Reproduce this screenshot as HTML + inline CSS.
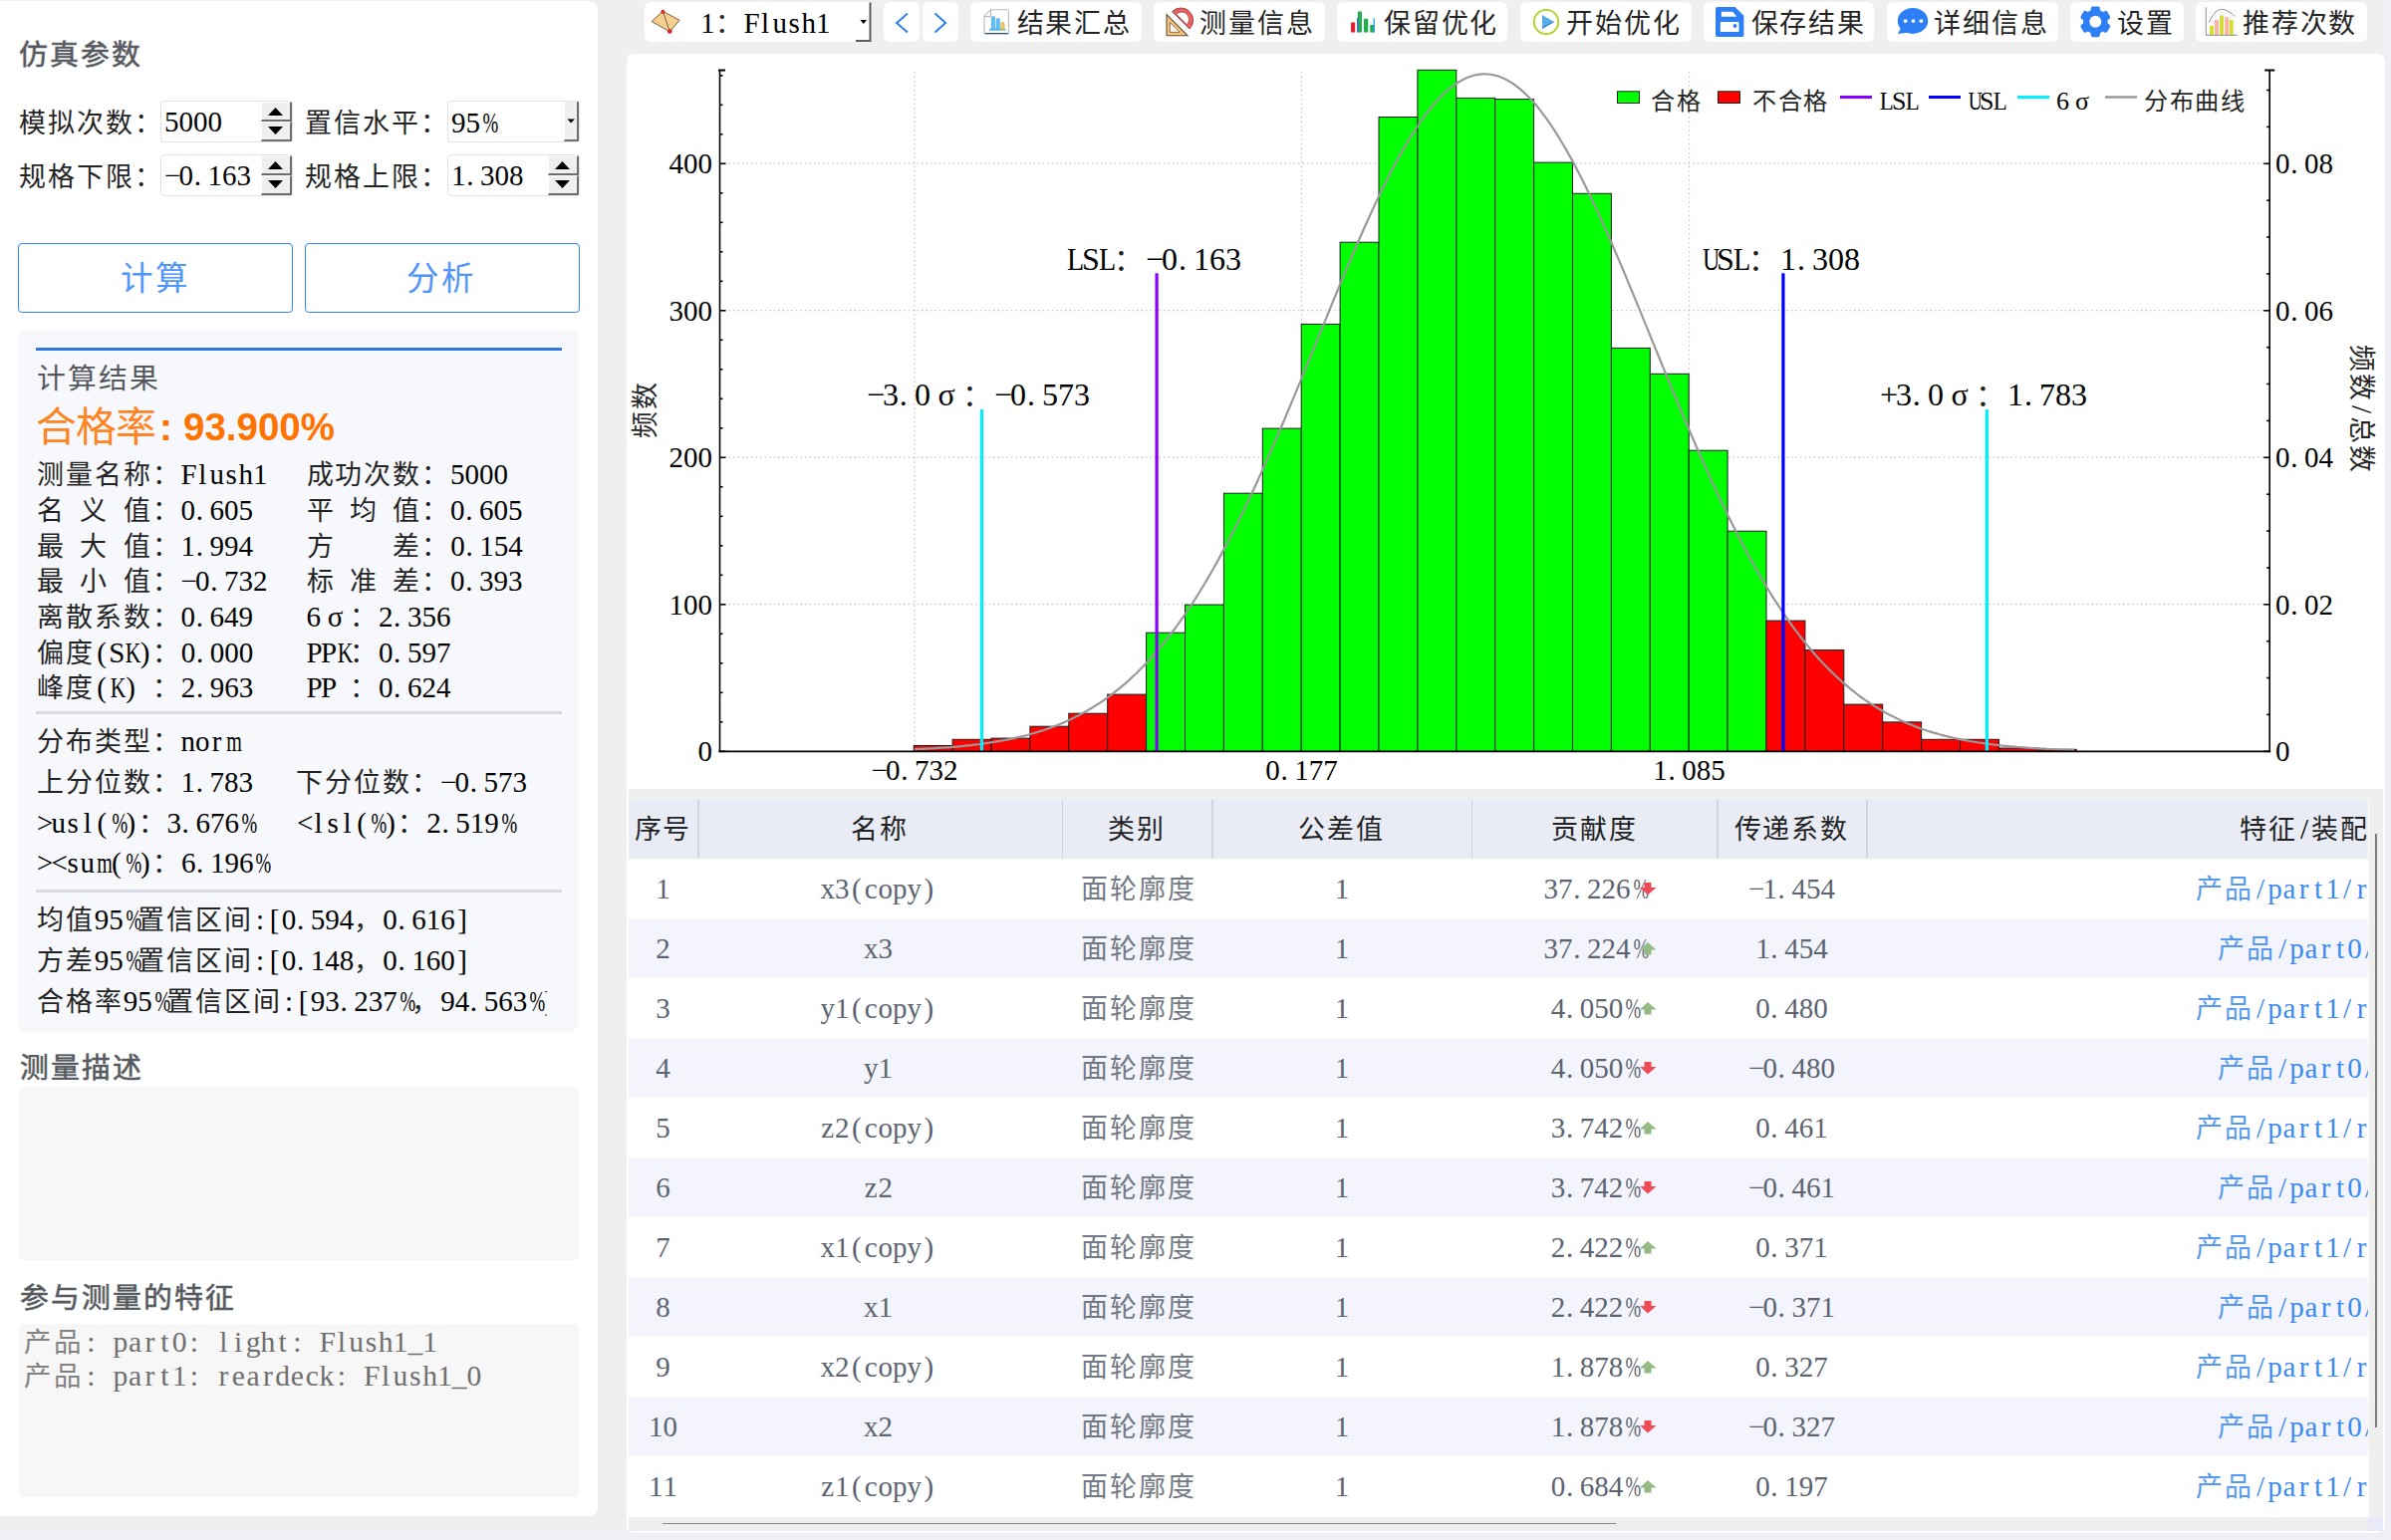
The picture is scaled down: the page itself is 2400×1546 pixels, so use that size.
<!DOCTYPE html><html lang="zh-CN"><head><meta charset="utf-8"><style>
*{box-sizing:border-box}
html,body{margin:0;padding:0}
body{width:2400px;height:1546px;overflow:hidden;position:relative;background:#efefef;font-family:"Liberation Serif",serif;}
.r{position:absolute}
.t{position:absolute;white-space:pre;font-size:29px;line-height:40px;color:#000}
.t i{display:inline-block;width:.5em;text-align:center;font-style:normal}
.t u{text-decoration:none;font-size:.93em;letter-spacing:.07em;opacity:.86}
.t b.w{display:inline-block;width:1em;text-align:center;font-weight:normal}
svg{position:absolute;left:0;top:0}
.ttl{font-size:31px;line-height:40px;color:#3b3f46;-webkit-text-stroke:.6px #3b3f46}
</style></head><body><div class="r" style="left:0px;top:1px;width:600px;height:1521px;background:#fff;border-radius:0 9px 9px 0"></div><div class="t" style="left:20px;top:34.0px;"></div><div class="t ttl" style="left:19px;top:34.5px"><u>仿真参数</u></div><div class="t" style="left:19px;top:102.5px;"><u>模拟次数：</u></div><div class="t" style="left:306px;top:102.5px;"><u>置信水平：</u></div><div class="t" style="left:19px;top:157.0px;"><u>规格下限：</u></div><div class="t" style="left:306px;top:157.0px;"><u>规格上限：</u></div><div class="r" style="left:161px;top:101px;width:133px;height:42px;background:#fff;border:1.5px solid #e3e3e3;border-radius:4px"></div><div class="r" style="left:262px;top:102.0px;width:31px;height:20.0px;background:#efefef;border-right:2.5px solid #6e6e6e;border-bottom:2.5px solid #6e6e6e;border-top:1px solid #fff;border-left:1px solid #fff"></div><div class="r" style="left:262px;top:122.0px;width:31px;height:20.0px;background:#efefef;border-right:2.5px solid #6e6e6e;border-bottom:2.5px solid #6e6e6e;border-top:1px solid #fff;border-left:1px solid #fff"></div><svg style="left:0;top:0" width="2400" height="210"><polygon points="269.0,116 284.0,116 276.5,108" fill="#000"/><polygon points="269.0,127.0 284.0,127.0 276.5,135.0" fill="#000"/></svg><div class="t" style="left:165px;top:102.0px;"><i>5</i><i>0</i><i>0</i><i>0</i></div><div class="r" style="left:161px;top:155px;width:133px;height:42px;background:#fff;border:1.5px solid #e3e3e3;border-radius:4px"></div><div class="r" style="left:262px;top:156.0px;width:31px;height:20.0px;background:#efefef;border-right:2.5px solid #6e6e6e;border-bottom:2.5px solid #6e6e6e;border-top:1px solid #fff;border-left:1px solid #fff"></div><div class="r" style="left:262px;top:176.0px;width:31px;height:20.0px;background:#efefef;border-right:2.5px solid #6e6e6e;border-bottom:2.5px solid #6e6e6e;border-top:1px solid #fff;border-left:1px solid #fff"></div><svg style="left:0;top:0" width="2400" height="210"><polygon points="269.0,170 284.0,170 276.5,162" fill="#000"/><polygon points="269.0,181.0 284.0,181.0 276.5,189.0" fill="#000"/></svg><div class="t" style="left:165px;top:156.0px;"><i>−</i><i>0</i><i style="transform:translateX(-.1em)">.</i><i>1</i><i>6</i><i>3</i></div><div class="r" style="left:449px;top:155px;width:133px;height:42px;background:#fff;border:1.5px solid #e3e3e3;border-radius:4px"></div><div class="r" style="left:550px;top:156.0px;width:31px;height:20.0px;background:#efefef;border-right:2.5px solid #6e6e6e;border-bottom:2.5px solid #6e6e6e;border-top:1px solid #fff;border-left:1px solid #fff"></div><div class="r" style="left:550px;top:176.0px;width:31px;height:20.0px;background:#efefef;border-right:2.5px solid #6e6e6e;border-bottom:2.5px solid #6e6e6e;border-top:1px solid #fff;border-left:1px solid #fff"></div><svg style="left:0;top:0" width="2400" height="210"><polygon points="557.0,170 572.0,170 564.5,162" fill="#000"/><polygon points="557.0,181.0 572.0,181.0 564.5,189.0" fill="#000"/></svg><div class="t" style="left:453px;top:156.0px;"><i>1</i><i style="transform:translateX(-.1em)">.</i><i>3</i><i>0</i><i>8</i></div><div class="r" style="left:449px;top:101px;width:133px;height:42px;background:#fff;border:1.5px solid #e3e3e3;border-radius:4px"></div><div class="r" style="left:566px;top:102px;width:15px;height:40px;background:#efefef;border-right:2.5px solid #6e6e6e;border-bottom:2.5px solid #6e6e6e;border-left:1px solid #fff"></div><svg style="left:0;top:0" width="600" height="150"><polygon points="569.5,119.5 577,119.5 573.2,123.5" fill="#000"/></svg><div class="t" style="left:453px;top:102.5px;"><i>9</i><i>5</i><i style="transform:scaleX(0.65)">%</i></div><div class="r" style="left:18px;top:243.5px;width:276px;height:70.5px;border:1.6px solid #3384fa;border-radius:4px;background:#fff"></div><div class="r" style="left:305.5px;top:243.5px;width:276.5px;height:70.5px;border:1.6px solid #3384fa;border-radius:4px;background:#fff"></div><div class="t" style="left:-144.0px;top:256.5px;font-size:35px;line-height:46px;color:#3384fa;width:600px;text-align:center;"><u>计算</u></div><div class="t" style="left:143.5px;top:256.5px;font-size:35px;line-height:46px;color:#3384fa;width:600px;text-align:center;"><u>分析</u></div><div class="r" style="left:18px;top:331px;width:562px;height:705px;background:#f7f8fc;border-radius:8px"></div><div class="r" style="left:36px;top:348.5px;width:528px;height:3.5px;background:#3079e4;"></div><div class="t" style="left:37px;top:359.5px;color:#3b3f46;font-size:31px;line-height:40px"><u>计算结果</u></div><div class="t" style="left:36px;top:404px;color:#ff7300;font-size:41px;line-height:50px"><u style="font-size:1em;letter-spacing:-.02em">合格率</u></div><div class="t" style="left:160px;top:404px;color:#ff7300;font-family:'Liberation Sans',sans-serif;font-weight:bold;font-size:38.5px;line-height:50px">:</div><div class="t" style="left:184px;top:404px;color:#ff7300;font-family:'Liberation Sans',sans-serif;font-weight:bold;font-size:38.5px;line-height:50px">93.900%</div><div class="t" style="left:37px;top:456.2px;"><u>测量名称：</u><i>F</i><i>l</i><i>u</i><i>s</i><i>h</i><i>1</i></div><div class="t" style="left:307.5px;top:456.2px;"><u>成功次数：</u><i>5</i><i>0</i><i>0</i><i>0</i></div><div class="t" style="left:37px;top:491.9px;"><u>名</u><i> </i><u>义</u><i> </i><u>值：</u><i>0</i><i style="transform:translateX(-.1em)">.</i><i>6</i><i>0</i><i>5</i></div><div class="t" style="left:307.5px;top:491.9px;"><u>平</u><i> </i><u>均</u><i> </i><u>值：</u><i>0</i><i style="transform:translateX(-.1em)">.</i><i>6</i><i>0</i><i>5</i></div><div class="t" style="left:37px;top:527.6px;"><u>最</u><i> </i><u>大</u><i> </i><u>值：</u><i>1</i><i style="transform:translateX(-.1em)">.</i><i>9</i><i>9</i><i>4</i></div><div class="t" style="left:307.5px;top:527.6px;"><u>方</u><i> </i><i> </i><i> </i><i> </i><u>差：</u><i>0</i><i style="transform:translateX(-.1em)">.</i><i>1</i><i>5</i><i>4</i></div><div class="t" style="left:37px;top:563.3px;"><u>最</u><i> </i><u>小</u><i> </i><u>值：</u><i>−</i><i>0</i><i style="transform:translateX(-.1em)">.</i><i>7</i><i>3</i><i>2</i></div><div class="t" style="left:307.5px;top:563.3px;"><u>标</u><i> </i><u>准</u><i> </i><u>差：</u><i>0</i><i style="transform:translateX(-.1em)">.</i><i>3</i><i>9</i><i>3</i></div><div class="t" style="left:37px;top:599.0px;"><u>离散系数：</u><i>0</i><i style="transform:translateX(-.1em)">.</i><i>6</i><i>4</i><i>9</i></div><div class="t" style="left:307.5px;top:599.0px;"><i>6</i><b class="w">σ</b><u>：</u><i>2</i><i style="transform:translateX(-.1em)">.</i><i>3</i><i>5</i><i>6</i></div><div class="t" style="left:37px;top:634.7px;"><u>偏度</u><i>(</i><i>S</i><i style="transform:scaleX(0.75)">K</i><i>)</i><u>：</u><i>0</i><i style="transform:translateX(-.1em)">.</i><i>0</i><i>0</i><i>0</i></div><div class="t" style="left:307.5px;top:634.7px;"><i>P</i><i>P</i><i style="transform:scaleX(0.75)">K</i><u>：</u><i>0</i><i style="transform:translateX(-.1em)">.</i><i>5</i><i>9</i><i>7</i></div><div class="t" style="left:37px;top:670.4px;"><u>峰度</u><i>(</i><i style="transform:scaleX(0.75)">K</i><i>)</i><i> </i><u>：</u><i>2</i><i style="transform:translateX(-.1em)">.</i><i>9</i><i>6</i><i>3</i></div><div class="t" style="left:307.5px;top:670.4px;"><i>P</i><i>P</i><i> </i><u>：</u><i>0</i><i style="transform:translateX(-.1em)">.</i><i>6</i><i>2</i><i>4</i></div><div class="r" style="left:36px;top:713.5px;width:528px;height:3.5px;background:#d8d9e2;"></div><div class="t" style="left:37px;top:723.5px;"><u>分布类型：</u><i>n</i><i>o</i><i>r</i><i style="transform:scaleX(0.69)">m</i></div><div class="t" style="left:37px;top:764.6px;"><u>上分位数：</u><i>1</i><i style="transform:translateX(-.1em)">.</i><i>7</i><i>8</i><i>3</i><i> </i><i> </i><i> </i><u>下分位数：</u><i>−</i><i>0</i><i style="transform:translateX(-.1em)">.</i><i>5</i><i>7</i><i>3</i></div><div class="t" style="left:37px;top:805.5px;"><i>&gt;</i><i>u</i><i>s</i><i>l</i><i>(</i><i style="transform:scaleX(0.65)">%</i><i>)</i><u>：</u><i>3</i><i style="transform:translateX(-.1em)">.</i><i>6</i><i>7</i><i>6</i><i style="transform:scaleX(0.65)">%</i><i> </i><i> </i><i> </i><i>&lt;</i><i>l</i><i>s</i><i>l</i><i>(</i><i style="transform:scaleX(0.65)">%</i><i>)</i><u>：</u><i>2</i><i style="transform:translateX(-.1em)">.</i><i>5</i><i>1</i><i>9</i><i style="transform:scaleX(0.65)">%</i></div><div class="t" style="left:37px;top:846.4px;"><i>&gt;</i><i>&lt;</i><i>s</i><i>u</i><i style="transform:scaleX(0.69)">m</i><i>(</i><i style="transform:scaleX(0.65)">%</i><i>)</i><u>：</u><i>6</i><i style="transform:translateX(-.1em)">.</i><i>1</i><i>9</i><i>6</i><i style="transform:scaleX(0.65)">%</i></div><div class="r" style="left:36px;top:892.5px;width:528px;height:3.5px;background:#d8d9e2;"></div><div class="t" style="left:37px;top:903.3px;"><u>均值</u><i>9</i><i>5</i><i style="transform:scaleX(0.65)">%</i><u>置信区间</u><i>:</i><i>[</i><i>0</i><i style="transform:translateX(-.1em)">.</i><i>5</i><i>9</i><i>4</i><u>，</u><i>0</i><i style="transform:translateX(-.1em)">.</i><i>6</i><i>1</i><i>6</i><i>]</i></div><div class="t" style="left:37px;top:943.7px;"><u>方差</u><i>9</i><i>5</i><i style="transform:scaleX(0.65)">%</i><u>置信区间</u><i>:</i><i>[</i><i>0</i><i style="transform:translateX(-.1em)">.</i><i>1</i><i>4</i><i>8</i><u>，</u><i>0</i><i style="transform:translateX(-.1em)">.</i><i>1</i><i>6</i><i>0</i><i>]</i></div><div class="r" style="left:0;top:0;width:549px;height:1040px;overflow:hidden"><div class="t" style="left:37px;top:984.5px;"><u>合格率</u><i>9</i><i>5</i><i style="transform:scaleX(0.65)">%</i><u>置信区间</u><i>:</i><i>[</i><i>9</i><i>3</i><i style="transform:translateX(-.1em)">.</i><i>2</i><i>3</i><i>7</i><i style="transform:scaleX(0.65)">%</i><u>，</u><i>9</i><i>4</i><i style="transform:translateX(-.1em)">.</i><i>5</i><i>6</i><i>3</i><i style="transform:scaleX(0.65)">%</i><i>]</i></div></div><div class="t ttl" style="left:20px;top:1051.5px"><u>测量描述</u></div><div class="r" style="left:19px;top:1091px;width:562px;height:174px;background:#f7f7f7;border-radius:5px"></div><div class="t ttl" style="left:20px;top:1283px"><u>参与测量的特征</u></div><div class="r" style="left:19px;top:1329px;width:562px;height:174px;background:#f7f7f7;border-radius:5px"></div><div class="t" style="left:24px;top:1327.3px;font-size:29.6px;line-height:41px;color:#6f6f6f;"><u>产品</u><i>:</i><i> </i><i>p</i><i>a</i><i>r</i><i>t</i><i>0</i><i>:</i><i> </i><i>l</i><i>i</i><i>g</i><i>h</i><i>t</i><i>:</i><i> </i><i>F</i><i>l</i><i>u</i><i>s</i><i>h</i><i>1</i><i>_</i><i>1</i></div><div class="t" style="left:24px;top:1360.5px;font-size:29.6px;line-height:41px;color:#6f6f6f;"><u>产品</u><i>:</i><i> </i><i>p</i><i>a</i><i>r</i><i>t</i><i>1</i><i>:</i><i> </i><i>r</i><i>e</i><i>a</i><i>r</i><i>d</i><i>e</i><i>c</i><i>k</i><i>:</i><i> </i><i>F</i><i>l</i><i>u</i><i>s</i><i>h</i><i>1</i><i>_</i><i>0</i></div><svg width="2400" height="800" style="left:0;top:0"><path d="M629,62 Q629,54 637,54 H2386 Q2394,54 2394,62 V792 H629 Z" fill="#fff"/><line x1="722.5" y1="164.2" x2="2278.2" y2="164.2" stroke="#c4c4c4" stroke-width="1.2" stroke-dasharray="1.5 3"/><line x1="722.5" y1="311.7" x2="2278.2" y2="311.7" stroke="#c4c4c4" stroke-width="1.2" stroke-dasharray="1.5 3"/><line x1="722.5" y1="459.2" x2="2278.2" y2="459.2" stroke="#c4c4c4" stroke-width="1.2" stroke-dasharray="1.5 3"/><line x1="722.5" y1="606.7" x2="2278.2" y2="606.7" stroke="#c4c4c4" stroke-width="1.2" stroke-dasharray="1.5 3"/><line x1="918" y1="72" x2="918" y2="754.3" stroke="#c4c4c4" stroke-width="1.2" stroke-dasharray="1.5 3"/><line x1="1306.6" y1="72" x2="1306.6" y2="754.3" stroke="#c4c4c4" stroke-width="1.2" stroke-dasharray="1.5 3"/><line x1="1695.6" y1="72" x2="1695.6" y2="754.3" stroke="#c4c4c4" stroke-width="1.2" stroke-dasharray="1.5 3"/><rect x="917.20" y="748.5" width="38.9" height="5.80" fill="#ff0000" stroke="#1c1c1c" stroke-width="1"/><rect x="956.10" y="742.3" width="38.9" height="12.00" fill="#ff0000" stroke="#1c1c1c" stroke-width="1"/><rect x="995.00" y="741.1" width="38.9" height="13.20" fill="#ff0000" stroke="#1c1c1c" stroke-width="1"/><rect x="1033.90" y="729.2" width="38.9" height="25.10" fill="#ff0000" stroke="#1c1c1c" stroke-width="1"/><rect x="1072.80" y="716.2" width="38.9" height="38.10" fill="#ff0000" stroke="#1c1c1c" stroke-width="1"/><rect x="1111.70" y="697.1" width="38.9" height="57.20" fill="#ff0000" stroke="#1c1c1c" stroke-width="1"/><rect x="1150.60" y="635.2" width="38.9" height="119.10" fill="#00ff00" stroke="#1c1c1c" stroke-width="1"/><rect x="1189.50" y="607.1" width="38.9" height="147.20" fill="#00ff00" stroke="#1c1c1c" stroke-width="1"/><rect x="1228.40" y="495.2" width="38.9" height="259.10" fill="#00ff00" stroke="#1c1c1c" stroke-width="1"/><rect x="1267.30" y="430.1" width="38.9" height="324.20" fill="#00ff00" stroke="#1c1c1c" stroke-width="1"/><rect x="1306.20" y="325.4" width="38.9" height="428.90" fill="#00ff00" stroke="#1c1c1c" stroke-width="1"/><rect x="1345.10" y="243.2" width="38.9" height="511.10" fill="#00ff00" stroke="#1c1c1c" stroke-width="1"/><rect x="1384.00" y="117.5" width="38.9" height="636.80" fill="#00ff00" stroke="#1c1c1c" stroke-width="1"/><rect x="1422.90" y="70.3" width="38.9" height="684.00" fill="#00ff00" stroke="#1c1c1c" stroke-width="1"/><rect x="1461.80" y="98.4" width="38.9" height="655.90" fill="#00ff00" stroke="#1c1c1c" stroke-width="1"/><rect x="1500.70" y="99.6" width="38.9" height="654.70" fill="#00ff00" stroke="#1c1c1c" stroke-width="1"/><rect x="1539.60" y="163.1" width="38.9" height="591.20" fill="#00ff00" stroke="#1c1c1c" stroke-width="1"/><rect x="1578.50" y="194.3" width="38.9" height="560.00" fill="#00ff00" stroke="#1c1c1c" stroke-width="1"/><rect x="1617.40" y="349.4" width="38.9" height="404.90" fill="#00ff00" stroke="#1c1c1c" stroke-width="1"/><rect x="1656.30" y="375.3" width="38.9" height="379.00" fill="#00ff00" stroke="#1c1c1c" stroke-width="1"/><rect x="1695.20" y="452.2" width="38.9" height="302.10" fill="#00ff00" stroke="#1c1c1c" stroke-width="1"/><rect x="1734.10" y="533.2" width="38.9" height="221.10" fill="#00ff00" stroke="#1c1c1c" stroke-width="1"/><rect x="1773.00" y="623.1" width="38.9" height="131.20" fill="#ff0000" stroke="#1c1c1c" stroke-width="1"/><rect x="1811.90" y="652.6" width="38.9" height="101.70" fill="#ff0000" stroke="#1c1c1c" stroke-width="1"/><rect x="1850.80" y="707.1" width="38.9" height="47.20" fill="#ff0000" stroke="#1c1c1c" stroke-width="1"/><rect x="1889.70" y="724.9" width="38.9" height="29.40" fill="#ff0000" stroke="#1c1c1c" stroke-width="1"/><rect x="1928.60" y="742.3" width="38.9" height="12.00" fill="#ff0000" stroke="#1c1c1c" stroke-width="1"/><rect x="1967.50" y="742.3" width="38.9" height="12.00" fill="#ff0000" stroke="#1c1c1c" stroke-width="1"/><rect x="2006.40" y="751" width="38.9" height="3.30" fill="#ff0000" stroke="#1c1c1c" stroke-width="1"/><rect x="2045.30" y="752.3" width="38.9" height="2.00" fill="#ff0000" stroke="#1c1c1c" stroke-width="1"/><polyline points="918.0,752.2 921.0,752.1 924.0,751.9 927.0,751.8 930.0,751.6 933.0,751.5 936.0,751.3 939.0,751.1 942.0,750.9 945.0,750.7 948.0,750.5 951.0,750.3 954.0,750.1 957.0,749.8 960.0,749.6 963.0,749.3 966.0,749.0 969.0,748.7 972.0,748.4 975.0,748.1 978.0,747.7 981.0,747.3 984.0,747.0 987.0,746.6 990.0,746.1 993.0,745.7 996.0,745.2 999.0,744.7 1002.0,744.2 1005.0,743.7 1008.0,743.1 1011.0,742.6 1014.0,741.9 1017.0,741.3 1020.0,740.6 1023.0,739.9 1026.0,739.2 1029.0,738.5 1032.0,737.7 1035.0,736.8 1038.0,736.0 1041.0,735.1 1044.0,734.1 1047.0,733.2 1050.0,732.2 1053.0,731.1 1056.0,730.0 1059.0,728.9 1062.0,727.7 1065.0,726.4 1068.0,725.2 1071.0,723.8 1074.0,722.5 1077.0,721.0 1080.0,719.5 1083.0,718.0 1086.0,716.4 1089.0,714.8 1092.0,713.0 1095.0,711.3 1098.0,709.4 1101.0,707.5 1104.0,705.6 1107.0,703.6 1110.0,701.5 1113.0,699.3 1116.0,697.1 1119.0,694.7 1122.0,692.4 1125.0,689.9 1128.0,687.4 1131.0,684.8 1134.0,682.1 1137.0,679.3 1140.0,676.5 1143.0,673.5 1146.0,670.5 1149.0,667.4 1152.0,664.2 1155.0,661.0 1158.0,657.6 1161.0,654.1 1164.0,650.6 1167.0,647.0 1170.0,643.2 1173.0,639.4 1176.0,635.5 1179.0,631.5 1182.0,627.4 1185.0,623.2 1188.0,618.9 1191.0,614.5 1194.0,610.1 1197.0,605.5 1200.0,600.8 1203.0,596.0 1206.0,591.2 1209.0,586.2 1212.0,581.1 1215.0,576.0 1218.0,570.7 1221.0,565.4 1224.0,559.9 1227.0,554.4 1230.0,548.8 1233.0,543.1 1236.0,537.3 1239.0,531.4 1242.0,525.4 1245.0,519.3 1248.0,513.2 1251.0,506.9 1254.0,500.6 1257.0,494.2 1260.0,487.8 1263.0,481.2 1266.0,474.6 1269.0,467.9 1272.0,461.2 1275.0,454.3 1278.0,447.5 1281.0,440.5 1284.0,433.6 1287.0,426.5 1290.0,419.4 1293.0,412.3 1296.0,405.1 1299.0,397.9 1302.0,390.7 1305.0,383.4 1308.0,376.1 1311.0,368.8 1314.0,361.5 1317.0,354.1 1320.0,346.8 1323.0,339.4 1326.0,332.1 1329.0,324.7 1332.0,317.4 1335.0,310.0 1338.0,302.7 1341.0,295.5 1344.0,288.2 1347.0,281.0 1350.0,273.9 1353.0,266.7 1356.0,259.7 1359.0,252.7 1362.0,245.7 1365.0,238.8 1368.0,232.0 1371.0,225.3 1374.0,218.7 1377.0,212.1 1380.0,205.6 1383.0,199.3 1386.0,193.0 1389.0,186.9 1392.0,180.9 1395.0,174.9 1398.0,169.2 1401.0,163.5 1404.0,158.0 1407.0,152.6 1410.0,147.4 1413.0,142.3 1416.0,137.3 1419.0,132.6 1422.0,128.0 1425.0,123.5 1428.0,119.2 1431.0,115.1 1434.0,111.2 1437.0,107.5 1440.0,103.9 1443.0,100.6 1446.0,97.4 1449.0,94.4 1452.0,91.6 1455.0,89.0 1458.0,86.6 1461.0,84.5 1464.0,82.5 1467.0,80.7 1470.0,79.2 1473.0,77.8 1476.0,76.7 1479.0,75.8 1482.0,75.1 1485.0,74.6 1488.0,74.4 1491.0,74.3 1494.0,74.5 1497.0,74.9 1500.0,75.5 1503.0,76.3 1506.0,77.3 1509.0,78.5 1512.0,80.0 1515.0,81.7 1518.0,83.5 1521.0,85.6 1524.0,87.9 1527.0,90.4 1530.0,93.1 1533.0,96.0 1536.0,99.0 1539.0,102.3 1542.0,105.8 1545.0,109.4 1548.0,113.3 1551.0,117.3 1554.0,121.5 1557.0,125.9 1560.0,130.4 1563.0,135.1 1566.0,140.0 1569.0,145.0 1572.0,150.1 1575.0,155.5 1578.0,160.9 1581.0,166.5 1584.0,172.2 1587.0,178.1 1590.0,184.1 1593.0,190.1 1596.0,196.4 1599.0,202.7 1602.0,209.1 1605.0,215.6 1608.0,222.2 1611.0,228.9 1614.0,235.7 1617.0,242.5 1620.0,249.4 1623.0,256.4 1626.0,263.4 1629.0,270.5 1632.0,277.7 1635.0,284.9 1638.0,292.1 1641.0,299.3 1644.0,306.6 1647.0,313.9 1650.0,321.3 1653.0,328.6 1656.0,336.0 1659.0,343.3 1662.0,350.7 1665.0,358.0 1668.0,365.4 1671.0,372.7 1674.0,380.0 1677.0,387.3 1680.0,394.5 1683.0,401.8 1686.0,409.0 1689.0,416.1 1692.0,423.2 1695.0,430.3 1698.0,437.3 1701.0,444.2 1704.0,451.1 1707.0,458.0 1710.0,464.8 1713.0,471.5 1716.0,478.1 1719.0,484.7 1722.0,491.2 1725.0,497.6 1728.0,504.0 1731.0,510.3 1734.0,516.5 1737.0,522.6 1740.0,528.6 1743.0,534.5 1746.0,540.4 1749.0,546.1 1752.0,551.8 1755.0,557.4 1758.0,562.9 1761.0,568.2 1764.0,573.5 1767.0,578.7 1770.0,583.8 1773.0,588.9 1776.0,593.8 1779.0,598.6 1782.0,603.3 1785.0,607.9 1788.0,612.5 1791.0,616.9 1794.0,621.2 1797.0,625.5 1800.0,629.6 1803.0,633.7 1806.0,637.6 1809.0,641.5 1812.0,645.2 1815.0,648.9 1818.0,652.5 1821.0,656.0 1824.0,659.4 1827.0,662.7 1830.0,665.9 1833.0,669.1 1836.0,672.1 1839.0,675.1 1842.0,678.0 1845.0,680.8 1848.0,683.5 1851.0,686.2 1854.0,688.7 1857.0,691.2 1860.0,693.6 1863.0,696.0 1866.0,698.3 1869.0,700.5 1872.0,702.6 1875.0,704.6 1878.0,706.6 1881.0,708.6 1884.0,710.4 1887.0,712.2 1890.0,714.0 1893.0,715.6 1896.0,717.3 1899.0,718.8 1902.0,720.3 1905.0,721.8 1908.0,723.2 1911.0,724.6 1914.0,725.9 1917.0,727.1 1920.0,728.3 1923.0,729.5 1926.0,730.6 1929.0,731.7 1932.0,732.7 1935.0,733.7 1938.0,734.6 1941.0,735.6 1944.0,736.4 1947.0,737.3 1950.0,738.1 1953.0,738.9 1956.0,739.6 1959.0,740.3 1962.0,741.0 1965.0,741.6 1968.0,742.3 1971.0,742.9 1974.0,743.4 1977.0,744.0 1980.0,744.5 1983.0,745.0 1986.0,745.5 1989.0,745.9 1992.0,746.4 1995.0,746.8 1998.0,747.2 2001.0,747.5 2004.0,747.9 2007.0,748.2 2010.0,748.6 2013.0,748.9 2016.0,749.2 2019.0,749.4 2022.0,749.7 2025.0,750.0 2028.0,750.2 2031.0,750.4 2034.0,750.6 2037.0,750.9 2040.0,751.0 2043.0,751.2 2046.0,751.4 2049.0,751.6 2052.0,751.7 2055.0,751.9 2058.0,752.0 2061.0,752.2 2064.0,752.3 2067.0,752.4 2070.0,752.5 2073.0,752.6 2076.0,752.7 2079.0,752.8 2082.0,752.9" fill="none" stroke="#999" stroke-width="2.2"/><rect x="983.8" y="411" width="3.2" height="343.29999999999995" fill="#00f0ff"/><rect x="1159.5" y="274.3" width="3.2" height="479.99999999999994" fill="#8a00ff"/><rect x="1788.3" y="274.3" width="3.2" height="479.99999999999994" fill="#0000ff"/><rect x="1992.8" y="411" width="3.2" height="343.29999999999995" fill="#00f0ff"/><line x1="722.5" y1="70" x2="722.5" y2="755.3" stroke="#000" stroke-width="1.6"/><line x1="721.5" y1="754.3" x2="2279.2" y2="754.3" stroke="#000" stroke-width="1.8"/><line x1="2278.2" y1="70" x2="2278.2" y2="755.3" stroke="#000" stroke-width="1.6"/><line x1="721.0" y1="70.5" x2="728.0" y2="70.5" stroke="#000" stroke-width="2"/><line x1="2273.2" y1="70.5" x2="2283.2" y2="70.5" stroke="#000" stroke-width="2"/><line x1="722.5" y1="754.3" x2="728.5" y2="754.3" stroke="#000" stroke-width="1.6"/><line x1="722.5" y1="724.8" x2="725.5" y2="724.8" stroke="#000" stroke-width="1.6"/><line x1="722.5" y1="695.3" x2="725.5" y2="695.3" stroke="#000" stroke-width="1.6"/><line x1="722.5" y1="665.8" x2="725.5" y2="665.8" stroke="#000" stroke-width="1.6"/><line x1="722.5" y1="636.3" x2="725.5" y2="636.3" stroke="#000" stroke-width="1.6"/><line x1="722.5" y1="606.8" x2="728.5" y2="606.8" stroke="#000" stroke-width="1.6"/><line x1="722.5" y1="577.3" x2="725.5" y2="577.3" stroke="#000" stroke-width="1.6"/><line x1="722.5" y1="547.8" x2="725.5" y2="547.8" stroke="#000" stroke-width="1.6"/><line x1="722.5" y1="518.3" x2="725.5" y2="518.3" stroke="#000" stroke-width="1.6"/><line x1="722.5" y1="488.8" x2="725.5" y2="488.8" stroke="#000" stroke-width="1.6"/><line x1="722.5" y1="459.3" x2="728.5" y2="459.3" stroke="#000" stroke-width="1.6"/><line x1="722.5" y1="429.8" x2="725.5" y2="429.8" stroke="#000" stroke-width="1.6"/><line x1="722.5" y1="400.3" x2="725.5" y2="400.3" stroke="#000" stroke-width="1.6"/><line x1="722.5" y1="370.8" x2="725.5" y2="370.8" stroke="#000" stroke-width="1.6"/><line x1="722.5" y1="341.3" x2="725.5" y2="341.3" stroke="#000" stroke-width="1.6"/><line x1="722.5" y1="311.8" x2="728.5" y2="311.8" stroke="#000" stroke-width="1.6"/><line x1="722.5" y1="282.3" x2="725.5" y2="282.3" stroke="#000" stroke-width="1.6"/><line x1="722.5" y1="252.8" x2="725.5" y2="252.8" stroke="#000" stroke-width="1.6"/><line x1="722.5" y1="223.3" x2="725.5" y2="223.3" stroke="#000" stroke-width="1.6"/><line x1="722.5" y1="193.8" x2="725.5" y2="193.8" stroke="#000" stroke-width="1.6"/><line x1="722.5" y1="164.3" x2="728.5" y2="164.3" stroke="#000" stroke-width="1.6"/><line x1="722.5" y1="134.8" x2="725.5" y2="134.8" stroke="#000" stroke-width="1.6"/><line x1="722.5" y1="105.3" x2="725.5" y2="105.3" stroke="#000" stroke-width="1.6"/><line x1="722.5" y1="75.8" x2="725.5" y2="75.8" stroke="#000" stroke-width="1.6"/><line x1="2272.2" y1="754.3" x2="2278.2" y2="754.3" stroke="#000" stroke-width="1.6"/><line x1="2275.2" y1="717.4" x2="2278.2" y2="717.4" stroke="#000" stroke-width="1.6"/><line x1="2275.2" y1="680.5" x2="2278.2" y2="680.5" stroke="#000" stroke-width="1.6"/><line x1="2275.2" y1="643.7" x2="2278.2" y2="643.7" stroke="#000" stroke-width="1.6"/><line x1="2272.2" y1="606.8" x2="2278.2" y2="606.8" stroke="#000" stroke-width="1.6"/><line x1="2275.2" y1="569.9" x2="2278.2" y2="569.9" stroke="#000" stroke-width="1.6"/><line x1="2275.2" y1="533.0" x2="2278.2" y2="533.0" stroke="#000" stroke-width="1.6"/><line x1="2275.2" y1="496.2" x2="2278.2" y2="496.2" stroke="#000" stroke-width="1.6"/><line x1="2272.2" y1="459.3" x2="2278.2" y2="459.3" stroke="#000" stroke-width="1.6"/><line x1="2275.2" y1="422.4" x2="2278.2" y2="422.4" stroke="#000" stroke-width="1.6"/><line x1="2275.2" y1="385.5" x2="2278.2" y2="385.5" stroke="#000" stroke-width="1.6"/><line x1="2275.2" y1="348.7" x2="2278.2" y2="348.7" stroke="#000" stroke-width="1.6"/><line x1="2272.2" y1="311.8" x2="2278.2" y2="311.8" stroke="#000" stroke-width="1.6"/><line x1="2275.2" y1="274.9" x2="2278.2" y2="274.9" stroke="#000" stroke-width="1.6"/><line x1="2275.2" y1="238.0" x2="2278.2" y2="238.0" stroke="#000" stroke-width="1.6"/><line x1="2275.2" y1="201.2" x2="2278.2" y2="201.2" stroke="#000" stroke-width="1.6"/><line x1="2272.2" y1="164.3" x2="2278.2" y2="164.3" stroke="#000" stroke-width="1.6"/><line x1="2275.2" y1="127.4" x2="2278.2" y2="127.4" stroke="#000" stroke-width="1.6"/><line x1="2275.2" y1="90.5" x2="2278.2" y2="90.5" stroke="#000" stroke-width="1.6"/><rect x="1623.5" y="91.8" width="22" height="11.7" fill="#00ff00" stroke="#222" stroke-width="1"/><rect x="1724.5" y="91.8" width="22" height="11.7" fill="#ff0000" stroke="#222" stroke-width="1"/><line x1="1847" y1="97.5" x2="1879" y2="97.5" stroke="#8a00ff" stroke-width="3"/><line x1="1936" y1="97.5" x2="1968" y2="97.5" stroke="#0000ff" stroke-width="3"/><line x1="2025" y1="97.5" x2="2057" y2="97.5" stroke="#00f0ff" stroke-width="3"/><line x1="2113" y1="97.5" x2="2145" y2="97.5" stroke="#999" stroke-width="2.5"/></svg><div class="t" style="left:115px;top:734.3px;width:600px;text-align:right;"><i>0</i></div><div class="t" style="left:115px;top:586.7px;width:600px;text-align:right;"><i>1</i><i>0</i><i>0</i></div><div class="t" style="left:115px;top:439.2px;width:600px;text-align:right;"><i>2</i><i>0</i><i>0</i></div><div class="t" style="left:115px;top:291.7px;width:600px;text-align:right;"><i>3</i><i>0</i><i>0</i></div><div class="t" style="left:115px;top:144.2px;width:600px;text-align:right;"><i>4</i><i>0</i><i>0</i></div><div class="t" style="left:2284px;top:734.3px;"><i>0</i></div><div class="t" style="left:2284px;top:586.7px;"><i>0</i><i style="transform:translateX(-.1em)">.</i><i>0</i><i>2</i></div><div class="t" style="left:2284px;top:439.2px;"><i>0</i><i style="transform:translateX(-.1em)">.</i><i>0</i><i>4</i></div><div class="t" style="left:2284px;top:291.7px;"><i>0</i><i style="transform:translateX(-.1em)">.</i><i>0</i><i>6</i></div><div class="t" style="left:2284px;top:144.2px;"><i>0</i><i style="transform:translateX(-.1em)">.</i><i>0</i><i>8</i></div><div class="t" style="left:618.0px;top:752.5px;width:600px;text-align:center;"><i>−</i><i>0</i><i style="transform:translateX(-.1em)">.</i><i>7</i><i>3</i><i>2</i></div><div class="t" style="left:1006.5999999999999px;top:752.5px;width:600px;text-align:center;"><i>0</i><i style="transform:translateX(-.1em)">.</i><i>1</i><i>7</i><i>7</i></div><div class="t" style="left:1395.6px;top:752.5px;width:600px;text-align:center;"><i>1</i><i style="transform:translateX(-.1em)">.</i><i>0</i><i>8</i><i>5</i></div><div class="t" style="left:617px;top:391px;width:60px;height:40px;transform:rotate(-90deg);text-align:center"><u>频数</u></div><div class="t" style="left:2306px;top:391px;width:130px;height:40px;transform:rotate(90deg);text-align:center"><u>频数</u><i>/</i><u>总数</u></div><div class="t" style="left:1070px;top:238.0px;font-size:32px;line-height:44px;"><i style="transform:scaleX(0.88)">L</i><i>S</i><i style="transform:scaleX(0.88)">L</i><u>：</u><i>−</i><i>0</i><i style="transform:translateX(-.1em)">.</i><i>1</i><i>6</i><i>3</i></div><div class="t" style="left:1707px;top:238.0px;font-size:32px;line-height:44px;"><i style="transform:scaleX(0.75)">U</i><i>S</i><i style="transform:scaleX(0.88)">L</i><u>：</u><i>1</i><i style="transform:translateX(-.1em)">.</i><i>3</i><i>0</i><i>8</i></div><div class="t" style="left:870px;top:373.6px;font-size:32px;line-height:44px;"><i>−</i><i>3</i><i style="transform:translateX(-.1em)">.</i><i>0</i><b class="w">σ</b><u>：</u><i>−</i><i>0</i><i style="transform:translateX(-.1em)">.</i><i>5</i><i>7</i><i>3</i></div><div class="t" style="left:1887px;top:373.6px;font-size:32px;line-height:44px;"><i>+</i><i>3</i><i style="transform:translateX(-.1em)">.</i><i>0</i><b class="w">σ</b><u>：</u><i>1</i><i style="transform:translateX(-.1em)">.</i><i>7</i><i>8</i><i>3</i></div><div class="t" style="left:1657px;top:83.5px;font-size:26px;line-height:36px;"><u>合格</u></div><div class="t" style="left:1759px;top:83.5px;font-size:26px;line-height:36px;"><u>不合格</u></div><div class="t" style="left:1886px;top:83.5px;font-size:26px;line-height:36px;"><i style="transform:scaleX(0.88)">L</i><i>S</i><i style="transform:scaleX(0.88)">L</i></div><div class="t" style="left:1974px;top:83.5px;font-size:26px;line-height:36px;"><i style="transform:scaleX(0.75)">U</i><i>S</i><i style="transform:scaleX(0.88)">L</i></div><div class="t" style="left:2064px;top:83.5px;font-size:26px;line-height:36px;"><i>6</i><b class="w">σ</b></div><div class="t" style="left:2152px;top:83.5px;font-size:26px;line-height:36px;"><u>分布曲线</u></div><div class="r" style="left:629px;top:792px;width:1765px;height:747px;background:#fff;border-radius:0 0 8px 8px"></div><div class="r" style="left:631px;top:792px;width:1761px;height:10px;background:#efefef;"></div><div class="r" style="left:631px;top:802px;width:1746px;height:60px;background:#e9ecf4;"></div><div class="r" style="left:700.4px;top:803px;width:1.2px;height:59px;background:#d3d6dd;"></div><div class="r" style="left:1066.2px;top:803px;width:1.2px;height:59px;background:#d3d6dd;"></div><div class="r" style="left:1216.4px;top:803px;width:1.2px;height:59px;background:#d3d6dd;"></div><div class="r" style="left:1477.2px;top:803px;width:1.2px;height:59px;background:#d3d6dd;"></div><div class="r" style="left:1723.4px;top:803px;width:1.2px;height:59px;background:#d3d6dd;"></div><div class="r" style="left:1873.4px;top:803px;width:1.2px;height:59px;background:#d3d6dd;"></div><div class="r" style="left:631px;top:862px;width:1746px;height:60px;background:#ffffff;"></div><div class="r" style="left:631px;top:922px;width:1746px;height:60px;background:#f3f4fc;"></div><div class="r" style="left:631px;top:982px;width:1746px;height:60px;background:#ffffff;"></div><div class="r" style="left:631px;top:1042px;width:1746px;height:60px;background:#f3f4fc;"></div><div class="r" style="left:631px;top:1102px;width:1746px;height:60px;background:#ffffff;"></div><div class="r" style="left:631px;top:1162px;width:1746px;height:60px;background:#f3f4fc;"></div><div class="r" style="left:631px;top:1222px;width:1746px;height:60px;background:#ffffff;"></div><div class="r" style="left:631px;top:1282px;width:1746px;height:60px;background:#f3f4fc;"></div><div class="r" style="left:631px;top:1342px;width:1746px;height:60px;background:#ffffff;"></div><div class="r" style="left:631px;top:1402px;width:1746px;height:60px;background:#f3f4fc;"></div><div class="r" style="left:631px;top:1462px;width:1746px;height:60px;background:#ffffff;"></div><div class="t" style="left:365.5px;top:812.0px;width:600px;text-align:center;"><u>序号</u></div><div class="t" style="left:583.3px;top:812.0px;width:600px;text-align:center;"><u>名称</u></div><div class="t" style="left:841.3px;top:812.0px;width:600px;text-align:center;"><u>类别</u></div><div class="t" style="left:1046.8px;top:812.0px;width:600px;text-align:center;"><u>公差值</u></div><div class="t" style="left:1300.3px;top:812.0px;width:600px;text-align:center;"><u>贡献度</u></div><div class="t" style="left:1498.4px;top:812.0px;width:600px;text-align:center;"><u>传递系数</u></div><div class="r" style="left:631px;top:790px;width:1746px;height:760px;overflow:hidden"><div class="t" style="left:1617px;top:22.0px;"><u>特征</u><i>/</i><u>装配</u></div></div><div class="r" style="left:631px;top:862px;width:1746px;height:661px;overflow:hidden"><div class="t" style="left:-265.5px;top:10.0px;color:#5b6470;width:600px;text-align:center;"><i>1</i></div><div class="t" style="left:-49.5px;top:10.0px;color:#5b6470;width:600px;text-align:center;"><i>x</i><i>3</i><i>(</i><i>c</i><i>o</i><i>p</i><i>y</i><i>)</i></div><div class="t" style="left:212.0px;top:10.0px;color:#5b6470;width:600px;text-align:center;"><u>面轮廓度</u></div><div class="t" style="left:416.0px;top:10.0px;color:#5b6470;width:600px;text-align:center;"><i>1</i></div><div class="t" style="left:669.3px;top:10.0px;color:#5b6470;width:600px;text-align:center;"><i>3</i><i>7</i><i style="transform:translateX(-.1em)">.</i><i>2</i><i>2</i><i>6</i><i style="transform:scaleX(0.65)">%</i></div><div class="t" style="left:867.4000000000001px;top:10.0px;color:#5b6470;width:600px;text-align:center;"><i>−</i><i>1</i><i style="transform:translateX(-.1em)">.</i><i>4</i><i>5</i><i>4</i></div><div class="t" style="left:1573px;top:10.0px;color:#3a8af0;"><u>产品</u><i>/</i><i>p</i><i>a</i><i>r</i><i>t</i><i>1</i><i>/</i><i>r</i><i>e</i><i>a</i><i>r</i><i>d</i><i>e</i><i>c</i><i>k</i></div><div class="t" style="left:-265.5px;top:70.0px;color:#5b6470;width:600px;text-align:center;"><i>2</i></div><div class="t" style="left:-49.5px;top:70.0px;color:#5b6470;width:600px;text-align:center;"><i>x</i><i>3</i></div><div class="t" style="left:212.0px;top:70.0px;color:#5b6470;width:600px;text-align:center;"><u>面轮廓度</u></div><div class="t" style="left:416.0px;top:70.0px;color:#5b6470;width:600px;text-align:center;"><i>1</i></div><div class="t" style="left:669.3px;top:70.0px;color:#5b6470;width:600px;text-align:center;"><i>3</i><i>7</i><i style="transform:translateX(-.1em)">.</i><i>2</i><i>2</i><i>4</i><i style="transform:scaleX(0.65)">%</i></div><div class="t" style="left:867.4000000000001px;top:70.0px;color:#5b6470;width:600px;text-align:center;"><i>1</i><i style="transform:translateX(-.1em)">.</i><i>4</i><i>5</i><i>4</i></div><div class="t" style="left:1595px;top:70.0px;color:#3a8af0;"><u>产品</u><i>/</i><i>p</i><i>a</i><i>r</i><i>t</i><i>0</i><i>/</i><i>l</i><i>i</i><i>g</i><i>h</i><i>t</i></div><div class="t" style="left:-265.5px;top:130.0px;color:#5b6470;width:600px;text-align:center;"><i>3</i></div><div class="t" style="left:-49.5px;top:130.0px;color:#5b6470;width:600px;text-align:center;"><i>y</i><i>1</i><i>(</i><i>c</i><i>o</i><i>p</i><i>y</i><i>)</i></div><div class="t" style="left:212.0px;top:130.0px;color:#5b6470;width:600px;text-align:center;"><u>面轮廓度</u></div><div class="t" style="left:416.0px;top:130.0px;color:#5b6470;width:600px;text-align:center;"><i>1</i></div><div class="t" style="left:669.3px;top:130.0px;color:#5b6470;width:600px;text-align:center;"><i>4</i><i style="transform:translateX(-.1em)">.</i><i>0</i><i>5</i><i>0</i><i style="transform:scaleX(0.65)">%</i></div><div class="t" style="left:867.4000000000001px;top:130.0px;color:#5b6470;width:600px;text-align:center;"><i>0</i><i style="transform:translateX(-.1em)">.</i><i>4</i><i>8</i><i>0</i></div><div class="t" style="left:1573px;top:130.0px;color:#3a8af0;"><u>产品</u><i>/</i><i>p</i><i>a</i><i>r</i><i>t</i><i>1</i><i>/</i><i>r</i><i>e</i><i>a</i><i>r</i><i>d</i><i>e</i><i>c</i><i>k</i></div><div class="t" style="left:-265.5px;top:190.0px;color:#5b6470;width:600px;text-align:center;"><i>4</i></div><div class="t" style="left:-49.5px;top:190.0px;color:#5b6470;width:600px;text-align:center;"><i>y</i><i>1</i></div><div class="t" style="left:212.0px;top:190.0px;color:#5b6470;width:600px;text-align:center;"><u>面轮廓度</u></div><div class="t" style="left:416.0px;top:190.0px;color:#5b6470;width:600px;text-align:center;"><i>1</i></div><div class="t" style="left:669.3px;top:190.0px;color:#5b6470;width:600px;text-align:center;"><i>4</i><i style="transform:translateX(-.1em)">.</i><i>0</i><i>5</i><i>0</i><i style="transform:scaleX(0.65)">%</i></div><div class="t" style="left:867.4000000000001px;top:190.0px;color:#5b6470;width:600px;text-align:center;"><i>−</i><i>0</i><i style="transform:translateX(-.1em)">.</i><i>4</i><i>8</i><i>0</i></div><div class="t" style="left:1595px;top:190.0px;color:#3a8af0;"><u>产品</u><i>/</i><i>p</i><i>a</i><i>r</i><i>t</i><i>0</i><i>/</i><i>l</i><i>i</i><i>g</i><i>h</i><i>t</i></div><div class="t" style="left:-265.5px;top:250.0px;color:#5b6470;width:600px;text-align:center;"><i>5</i></div><div class="t" style="left:-49.5px;top:250.0px;color:#5b6470;width:600px;text-align:center;"><i>z</i><i>2</i><i>(</i><i>c</i><i>o</i><i>p</i><i>y</i><i>)</i></div><div class="t" style="left:212.0px;top:250.0px;color:#5b6470;width:600px;text-align:center;"><u>面轮廓度</u></div><div class="t" style="left:416.0px;top:250.0px;color:#5b6470;width:600px;text-align:center;"><i>1</i></div><div class="t" style="left:669.3px;top:250.0px;color:#5b6470;width:600px;text-align:center;"><i>3</i><i style="transform:translateX(-.1em)">.</i><i>7</i><i>4</i><i>2</i><i style="transform:scaleX(0.65)">%</i></div><div class="t" style="left:867.4000000000001px;top:250.0px;color:#5b6470;width:600px;text-align:center;"><i>0</i><i style="transform:translateX(-.1em)">.</i><i>4</i><i>6</i><i>1</i></div><div class="t" style="left:1573px;top:250.0px;color:#3a8af0;"><u>产品</u><i>/</i><i>p</i><i>a</i><i>r</i><i>t</i><i>1</i><i>/</i><i>r</i><i>e</i><i>a</i><i>r</i><i>d</i><i>e</i><i>c</i><i>k</i></div><div class="t" style="left:-265.5px;top:310.0px;color:#5b6470;width:600px;text-align:center;"><i>6</i></div><div class="t" style="left:-49.5px;top:310.0px;color:#5b6470;width:600px;text-align:center;"><i>z</i><i>2</i></div><div class="t" style="left:212.0px;top:310.0px;color:#5b6470;width:600px;text-align:center;"><u>面轮廓度</u></div><div class="t" style="left:416.0px;top:310.0px;color:#5b6470;width:600px;text-align:center;"><i>1</i></div><div class="t" style="left:669.3px;top:310.0px;color:#5b6470;width:600px;text-align:center;"><i>3</i><i style="transform:translateX(-.1em)">.</i><i>7</i><i>4</i><i>2</i><i style="transform:scaleX(0.65)">%</i></div><div class="t" style="left:867.4000000000001px;top:310.0px;color:#5b6470;width:600px;text-align:center;"><i>−</i><i>0</i><i style="transform:translateX(-.1em)">.</i><i>4</i><i>6</i><i>1</i></div><div class="t" style="left:1595px;top:310.0px;color:#3a8af0;"><u>产品</u><i>/</i><i>p</i><i>a</i><i>r</i><i>t</i><i>0</i><i>/</i><i>l</i><i>i</i><i>g</i><i>h</i><i>t</i></div><div class="t" style="left:-265.5px;top:370.0px;color:#5b6470;width:600px;text-align:center;"><i>7</i></div><div class="t" style="left:-49.5px;top:370.0px;color:#5b6470;width:600px;text-align:center;"><i>x</i><i>1</i><i>(</i><i>c</i><i>o</i><i>p</i><i>y</i><i>)</i></div><div class="t" style="left:212.0px;top:370.0px;color:#5b6470;width:600px;text-align:center;"><u>面轮廓度</u></div><div class="t" style="left:416.0px;top:370.0px;color:#5b6470;width:600px;text-align:center;"><i>1</i></div><div class="t" style="left:669.3px;top:370.0px;color:#5b6470;width:600px;text-align:center;"><i>2</i><i style="transform:translateX(-.1em)">.</i><i>4</i><i>2</i><i>2</i><i style="transform:scaleX(0.65)">%</i></div><div class="t" style="left:867.4000000000001px;top:370.0px;color:#5b6470;width:600px;text-align:center;"><i>0</i><i style="transform:translateX(-.1em)">.</i><i>3</i><i>7</i><i>1</i></div><div class="t" style="left:1573px;top:370.0px;color:#3a8af0;"><u>产品</u><i>/</i><i>p</i><i>a</i><i>r</i><i>t</i><i>1</i><i>/</i><i>r</i><i>e</i><i>a</i><i>r</i><i>d</i><i>e</i><i>c</i><i>k</i></div><div class="t" style="left:-265.5px;top:430.0px;color:#5b6470;width:600px;text-align:center;"><i>8</i></div><div class="t" style="left:-49.5px;top:430.0px;color:#5b6470;width:600px;text-align:center;"><i>x</i><i>1</i></div><div class="t" style="left:212.0px;top:430.0px;color:#5b6470;width:600px;text-align:center;"><u>面轮廓度</u></div><div class="t" style="left:416.0px;top:430.0px;color:#5b6470;width:600px;text-align:center;"><i>1</i></div><div class="t" style="left:669.3px;top:430.0px;color:#5b6470;width:600px;text-align:center;"><i>2</i><i style="transform:translateX(-.1em)">.</i><i>4</i><i>2</i><i>2</i><i style="transform:scaleX(0.65)">%</i></div><div class="t" style="left:867.4000000000001px;top:430.0px;color:#5b6470;width:600px;text-align:center;"><i>−</i><i>0</i><i style="transform:translateX(-.1em)">.</i><i>3</i><i>7</i><i>1</i></div><div class="t" style="left:1595px;top:430.0px;color:#3a8af0;"><u>产品</u><i>/</i><i>p</i><i>a</i><i>r</i><i>t</i><i>0</i><i>/</i><i>l</i><i>i</i><i>g</i><i>h</i><i>t</i></div><div class="t" style="left:-265.5px;top:490.0px;color:#5b6470;width:600px;text-align:center;"><i>9</i></div><div class="t" style="left:-49.5px;top:490.0px;color:#5b6470;width:600px;text-align:center;"><i>x</i><i>2</i><i>(</i><i>c</i><i>o</i><i>p</i><i>y</i><i>)</i></div><div class="t" style="left:212.0px;top:490.0px;color:#5b6470;width:600px;text-align:center;"><u>面轮廓度</u></div><div class="t" style="left:416.0px;top:490.0px;color:#5b6470;width:600px;text-align:center;"><i>1</i></div><div class="t" style="left:669.3px;top:490.0px;color:#5b6470;width:600px;text-align:center;"><i>1</i><i style="transform:translateX(-.1em)">.</i><i>8</i><i>7</i><i>8</i><i style="transform:scaleX(0.65)">%</i></div><div class="t" style="left:867.4000000000001px;top:490.0px;color:#5b6470;width:600px;text-align:center;"><i>0</i><i style="transform:translateX(-.1em)">.</i><i>3</i><i>2</i><i>7</i></div><div class="t" style="left:1573px;top:490.0px;color:#3a8af0;"><u>产品</u><i>/</i><i>p</i><i>a</i><i>r</i><i>t</i><i>1</i><i>/</i><i>r</i><i>e</i><i>a</i><i>r</i><i>d</i><i>e</i><i>c</i><i>k</i></div><div class="t" style="left:-265.5px;top:550.0px;color:#5b6470;width:600px;text-align:center;"><i>1</i><i>0</i></div><div class="t" style="left:-49.5px;top:550.0px;color:#5b6470;width:600px;text-align:center;"><i>x</i><i>2</i></div><div class="t" style="left:212.0px;top:550.0px;color:#5b6470;width:600px;text-align:center;"><u>面轮廓度</u></div><div class="t" style="left:416.0px;top:550.0px;color:#5b6470;width:600px;text-align:center;"><i>1</i></div><div class="t" style="left:669.3px;top:550.0px;color:#5b6470;width:600px;text-align:center;"><i>1</i><i style="transform:translateX(-.1em)">.</i><i>8</i><i>7</i><i>8</i><i style="transform:scaleX(0.65)">%</i></div><div class="t" style="left:867.4000000000001px;top:550.0px;color:#5b6470;width:600px;text-align:center;"><i>−</i><i>0</i><i style="transform:translateX(-.1em)">.</i><i>3</i><i>2</i><i>7</i></div><div class="t" style="left:1595px;top:550.0px;color:#3a8af0;"><u>产品</u><i>/</i><i>p</i><i>a</i><i>r</i><i>t</i><i>0</i><i>/</i><i>l</i><i>i</i><i>g</i><i>h</i><i>t</i></div><div class="t" style="left:-265.5px;top:610.0px;color:#5b6470;width:600px;text-align:center;"><i>1</i><i>1</i></div><div class="t" style="left:-49.5px;top:610.0px;color:#5b6470;width:600px;text-align:center;"><i>z</i><i>1</i><i>(</i><i>c</i><i>o</i><i>p</i><i>y</i><i>)</i></div><div class="t" style="left:212.0px;top:610.0px;color:#5b6470;width:600px;text-align:center;"><u>面轮廓度</u></div><div class="t" style="left:416.0px;top:610.0px;color:#5b6470;width:600px;text-align:center;"><i>1</i></div><div class="t" style="left:669.3px;top:610.0px;color:#5b6470;width:600px;text-align:center;"><i>0</i><i style="transform:translateX(-.1em)">.</i><i>6</i><i>8</i><i>4</i><i style="transform:scaleX(0.65)">%</i></div><div class="t" style="left:867.4000000000001px;top:610.0px;color:#5b6470;width:600px;text-align:center;"><i>0</i><i style="transform:translateX(-.1em)">.</i><i>1</i><i>9</i><i>7</i></div><div class="t" style="left:1573px;top:610.0px;color:#3a8af0;"><u>产品</u><i>/</i><i>p</i><i>a</i><i>r</i><i>t</i><i>1</i><i>/</i><i>r</i><i>e</i><i>a</i><i>r</i><i>d</i><i>e</i><i>c</i><i>k</i></div></div><div class="r" style="left:631px;top:1523px;width:1747px;height:14px;background:#efefef;"></div><div class="r" style="left:665px;top:1528.8px;width:957px;height:1.7px;background:#858585;"></div><div class="r" style="left:2378px;top:802px;width:14px;height:721px;background:#efefef;"></div><div class="r" style="left:2377px;top:1523px;width:15px;height:14px;background:#e8eaf8;"></div><div class="r" style="left:2384.2px;top:836.5px;width:1.5px;height:596.5px;background:#7a7a7a;"></div><div class="r" style="left:2394px;top:0px;width:6px;height:1546px;background:#eff0f5;"></div><div class="r" style="left:0px;top:1539.5px;width:2394px;height:7px;background:#eff0f5;"></div><div class="r" style="left:627.8px;top:0px;width:1.2px;height:1546px;background:#eff0f5;"></div><svg width="2400" height="1546" style="left:0;top:0"><polygon points="1646,891 1654,898.5 1662.5,891 1657.5,891 1657.5,886 1650.5,886 1650.5,891" fill="#ee4b57"/><polygon points="1646,953.5 1654,946 1662.5,953.5 1657.5,953.5 1657.5,958.5 1650.5,958.5 1650.5,953.5" fill="#93bb83"/><polygon points="1646,1013.5 1654,1006 1662.5,1013.5 1657.5,1013.5 1657.5,1018.5 1650.5,1018.5 1650.5,1013.5" fill="#93bb83"/><polygon points="1646,1071 1654,1078.5 1662.5,1071 1657.5,1071 1657.5,1066 1650.5,1066 1650.5,1071" fill="#ee4b57"/><polygon points="1646,1133.5 1654,1126 1662.5,1133.5 1657.5,1133.5 1657.5,1138.5 1650.5,1138.5 1650.5,1133.5" fill="#93bb83"/><polygon points="1646,1191 1654,1198.5 1662.5,1191 1657.5,1191 1657.5,1186 1650.5,1186 1650.5,1191" fill="#ee4b57"/><polygon points="1646,1253.5 1654,1246 1662.5,1253.5 1657.5,1253.5 1657.5,1258.5 1650.5,1258.5 1650.5,1253.5" fill="#93bb83"/><polygon points="1646,1311 1654,1318.5 1662.5,1311 1657.5,1311 1657.5,1306 1650.5,1306 1650.5,1311" fill="#ee4b57"/><polygon points="1646,1373.5 1654,1366 1662.5,1373.5 1657.5,1373.5 1657.5,1378.5 1650.5,1378.5 1650.5,1373.5" fill="#93bb83"/><polygon points="1646,1431 1654,1438.5 1662.5,1431 1657.5,1431 1657.5,1426 1650.5,1426 1650.5,1431" fill="#ee4b57"/><polygon points="1646,1493.5 1654,1486 1662.5,1493.5 1657.5,1493.5 1657.5,1498.5 1650.5,1498.5 1650.5,1493.5" fill="#93bb83"/></svg><div class="r" style="left:647px;top:2px;width:227.5px;height:39.5px;background:#fff;border-radius:6px"></div><div class="r" style="left:887px;top:2px;width:35.6px;height:39.5px;background:#fff;border-radius:6px"></div><div class="r" style="left:926px;top:2px;width:35.8px;height:39.5px;background:#fff;border-radius:6px"></div><div class="r" style="left:973.7px;top:2px;width:172.0px;height:39.5px;background:#fff;border-radius:6px"></div><div class="t" style="left:1020.5px;top:3.2px;"><u>结果汇总</u></div><div class="r" style="left:1158.2px;top:2px;width:171.39999999999986px;height:39.5px;background:#fff;border-radius:6px"></div><div class="t" style="left:1204px;top:3.2px;"><u>测量信息</u></div><div class="r" style="left:1342.2px;top:2px;width:171.29999999999995px;height:39.5px;background:#fff;border-radius:6px"></div><div class="t" style="left:1388.8px;top:3.2px;"><u>保留优化</u></div><div class="r" style="left:1525.8px;top:2px;width:171.9000000000001px;height:39.5px;background:#fff;border-radius:6px"></div><div class="t" style="left:1572px;top:3.2px;"><u>开始优化</u></div><div class="r" style="left:1710.2px;top:2px;width:171.29999999999995px;height:39.5px;background:#fff;border-radius:6px"></div><div class="t" style="left:1757.5px;top:3.2px;"><u>保存结果</u></div><div class="r" style="left:1894px;top:2px;width:172px;height:39.5px;background:#fff;border-radius:6px"></div><div class="t" style="left:1941.4px;top:3.2px;"><u>详细信息</u></div><div class="r" style="left:2078px;top:2px;width:113.80000000000018px;height:39.5px;background:#fff;border-radius:6px"></div><div class="t" style="left:2125px;top:3.2px;"><u>设置</u></div><div class="r" style="left:2204px;top:2px;width:171.5999999999999px;height:39.5px;background:#fff;border-radius:6px"></div><div class="t" style="left:2250.8px;top:3.2px;"><u>推荐次数</u></div><div class="t" style="left:703px;top:3.2px;"><i>1</i><u>：</u><i>F</i><i>l</i><i>u</i><i>s</i><i>h</i><i>1</i></div><svg width="2400" height="50" style="left:0;top:0"><path d="M873.5,2.5 V41 H859" fill="none" stroke="#5a5a5a" stroke-width="2"/><polygon points="863.5,20 870,20 866.7,24" fill="#000"/><polygon points="654,21.5 665.4,11.4 682.1,20.3 672.3,31.8" fill="#f5cf90" stroke="#7a6040" stroke-width="1"/><line x1="665.4" y1="11.4" x2="672.3" y2="31.8" stroke="#7a6040" stroke-width="1"/><circle cx="665.4" cy="11.8" r="2" fill="#e02020"/><circle cx="672.3" cy="31.5" r="2.3" fill="#e02020"/><polyline points="911,13.5 900,23 911,32.6" fill="none" stroke="#2f7ff5" stroke-width="2"/><polyline points="938.5,13.5 949.1,23 938.5,32.6" fill="none" stroke="#2f7ff5" stroke-width="2"/><path d="M988,15.8 L994.6,9.8 H1011 Q1012.4,9.8 1012.4,11.2 V32.6 Q1012.4,34 1011,34 H989.4 Q988,34 988,32.6 Z" fill="#fff" stroke="#bbb" stroke-width="1.1"/><path d="M988,16.7 H994.6 V9.8" fill="none" stroke="#999" stroke-width="0.8"/><line x1="988.5" y1="33.6" x2="1012" y2="33.6" stroke="#1e4a7a" stroke-width="1.1"/><path d="M992.3,30.8 L994,28.2 H1008.5 L1010.2,30.8 Z" fill="#6cc6f5"/><rect x="995.3" y="16.4" width="3.3" height="13.8" rx="1.6" fill="#5cc4fa" stroke="#3a8ad0" stroke-width="0.5"/><rect x="1000.1" y="18.4" width="3.3" height="11.8" rx="1.6" fill="#5cc4fa" stroke="#3a8ad0" stroke-width="0.5"/><rect x="1004.9" y="22.3" width="3.2" height="7.9" rx="1.5" fill="#f0cf60" stroke="#b09030" stroke-width="0.5"/><path d="M1176.6,11.6 A12.3,12.3 0 0 1 1194,29 Z" fill="#f06060" stroke="#8a3a3a" stroke-width="0.9"/><path d="M1180.8,14.2 A7.4,7.4 0 0 1 1191.3,24.7 Z" fill="#fff" stroke="#8a3a3a" stroke-width="0.7"/><path d="M1171,14.5 L1171,35.8 L1192,35.8 Z" fill="#f5c47e" stroke="#6a5030" stroke-width="1.1"/><path d="M1174.3,22.5 L1174.3,32.3 L1184,32.3 Z" fill="#fff" stroke="#6a5030" stroke-width="0.8"/><rect x="1356" y="22.5" width="4.2" height="10" fill="#e52030"/><rect x="1362.8" y="11.5" width="4.2" height="21" fill="#20b050"/><rect x="1362.2" y="18" width="1.2" height="14.5" fill="#3050e0"/><rect x="1369" y="18.8" width="4.2" height="13.7" fill="#20b050"/><rect x="1375.3" y="25" width="4.2" height="7.5" fill="#20b050"/><rect x="1378.6" y="18.3" width="1.3" height="14.2" fill="#20a0f0"/><circle cx="1552" cy="22" r="12.2" fill="#fff" stroke="#a6d41e" stroke-width="1.8"/><polygon points="1548,15 1548,28.8 1560,22" fill="#58acea"/><polygon points="1548,28.8 1560,22 1559,21.6 1548,27.5" fill="#2a78b8"/><path d="M1724,7 H1741.5 L1750.4,15.7 V35 Q1750.4,37 1748.4,37 H1724 Q1722,37 1722,35 V9 Q1722,7 1724,7 Z" fill="#2d7ff5"/><path d="M1727.8,11.8 H1739.3 L1743.3,16.7 H1727.8 Z" fill="#fff"/><rect x="1726.8" y="22.1" width="18.7" height="9.9" rx="1" fill="#fff"/><circle cx="1741.5" cy="26" r="1.9" fill="#2d7ff5"/><ellipse cx="1920" cy="20.9" rx="15.2" ry="13" fill="#2d7ff5"/><polygon points="1908,28 1905,34 1915,32.8" fill="#2d7ff5"/><circle cx="1912.6" cy="21.1" r="1.9" fill="#fff"/><circle cx="1920.5" cy="21.1" r="1.9" fill="#fff"/><circle cx="1928.4" cy="21.1" r="1.9" fill="#fff"/><rect x="2098.7000000000003" y="6.4" width="9.2" height="8" rx="2.2" fill="#2d7ff5" transform="rotate(0 2103.3 21.8)"/><rect x="2098.7000000000003" y="6.4" width="9.2" height="8" rx="2.2" fill="#2d7ff5" transform="rotate(60 2103.3 21.8)"/><rect x="2098.7000000000003" y="6.4" width="9.2" height="8" rx="2.2" fill="#2d7ff5" transform="rotate(120 2103.3 21.8)"/><rect x="2098.7000000000003" y="6.4" width="9.2" height="8" rx="2.2" fill="#2d7ff5" transform="rotate(180 2103.3 21.8)"/><rect x="2098.7000000000003" y="6.4" width="9.2" height="8" rx="2.2" fill="#2d7ff5" transform="rotate(240 2103.3 21.8)"/><rect x="2098.7000000000003" y="6.4" width="9.2" height="8" rx="2.2" fill="#2d7ff5" transform="rotate(300 2103.3 21.8)"/><circle cx="2103.3" cy="21.8" r="12.3" fill="#2d7ff5"/><circle cx="2103.3" cy="21.8" r="6" fill="#fff"/><rect x="2214" y="7.2" width="31.7" height="28.2" fill="#fff"/><line x1="2219" y1="7.5" x2="2219" y2="35" stroke="#ececec" stroke-width="0.6"/><line x1="2224" y1="7.5" x2="2224" y2="35" stroke="#ececec" stroke-width="0.6"/><line x1="2229" y1="7.5" x2="2229" y2="35" stroke="#ececec" stroke-width="0.6"/><line x1="2234" y1="7.5" x2="2234" y2="35" stroke="#ececec" stroke-width="0.6"/><line x1="2239" y1="7.5" x2="2239" y2="35" stroke="#ececec" stroke-width="0.6"/><line x1="2244" y1="7.5" x2="2244" y2="35" stroke="#ececec" stroke-width="0.6"/><line x1="2214" y1="12" x2="2245.7" y2="12" stroke="#ececec" stroke-width="0.6"/><line x1="2214" y1="17" x2="2245.7" y2="17" stroke="#ececec" stroke-width="0.6"/><line x1="2214" y1="22" x2="2245.7" y2="22" stroke="#ececec" stroke-width="0.6"/><line x1="2214" y1="27" x2="2245.7" y2="27" stroke="#ececec" stroke-width="0.6"/><line x1="2214" y1="32" x2="2245.7" y2="32" stroke="#ececec" stroke-width="0.6"/><rect x="2218" y="26" width="4" height="9.2" fill="#d6dc3a"/><rect x="2223" y="20" width="4" height="15.2" fill="#ffb4a2"/><rect x="2228" y="15.4" width="4" height="19.8" fill="#d6dc3a"/><rect x="2233.2" y="17.3" width="4" height="17.9" fill="#ffb4a2"/><rect x="2237.8" y="20" width="4" height="15.2" fill="#d6dc3a"/><path d="M2217.4,22.6 C2222,12 2226,9.4 2230.6,9.4 C2235,9.4 2239,13 2243,16.2" fill="none" stroke="#888" stroke-width="0.9"/><path d="M2214.3,7.2 V35.3 H2245.7" fill="none" stroke="#8a8a8a" stroke-width="1"/></svg></body></html>
